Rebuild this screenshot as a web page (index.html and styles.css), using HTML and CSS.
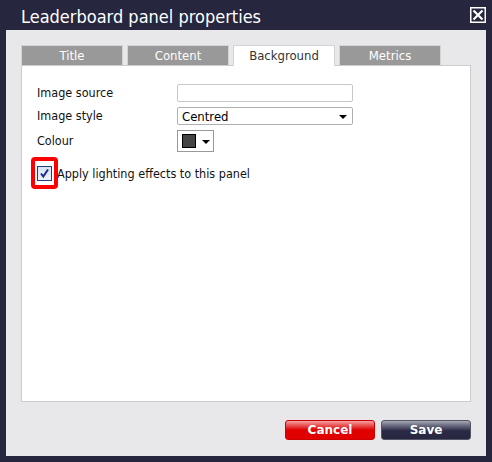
FILE: index.html
```html
<!DOCTYPE html>
<html>
<head>
<meta charset="utf-8">
<link rel="stylesheet" href="styles.css">
</head>
<body>
<div class="dialog">
  <div class="titlebar">
    <span class="title">Leaderboard panel properties</span>
    <svg class="close" width="16" height="16" viewBox="0 0 16 16">
      <rect x="0.75" y="0.75" width="14.5" height="14.5" fill="none" stroke="#fff" stroke-width="1.5"/>
      <path d="M3.5 3.5 L12.5 12.5 M12.5 3.5 L3.5 12.5" stroke="#fff" stroke-width="2.2"/>
    </svg>
  </div>
  <div class="body">
    <div class="tabs">
      <div class="tab">Title</div>
      <div class="tab">Content</div>
      <div class="tab active">Background</div>
      <div class="tab">Metrics</div>
    </div>
    <div class="panel">
      <div class="form">
        <label class="lbl">Image source</label>
        <div class="input"></div>
        <label class="lbl">Image style</label>
        <div class="select"><span>Centred</span><span class="arrow"></span></div>
        <label class="lbl">Colour</label>
        <div class="picker"><span class="swatch"></span><span class="arrow"></span></div>
      </div>
      <div class="check-row">
        <span class="checkbox">
          <svg width="11" height="11" viewBox="0 0 11 11"><path d="M2 5.5 L4.3 8.5 L9 1.5" fill="none" stroke="#1c2a8a" stroke-width="2"/></svg>
          <span class="highlight"></span>
        </span>
        <span class="check-label">Apply lighting effects to this panel</span>
      </div>
    </div>
    <div class="buttons">
      <div class="btn cancel">Cancel</div>
      <div class="btn save">Save</div>
    </div>
  </div>
</div>
</body>
</html>
```

FILE: styles.css
```css
* {
  box-sizing: border-box;
}
html, body {
  margin: 0;
  padding: 0;
  background: #26263f;
}
.dialog {
  width: 492px;
  height: 462px;
  background: #26263f;
  display: flex;
  flex-direction: column;
  font-family: "DejaVu Sans Condensed", "DejaVu Sans", sans-serif;
}
.titlebar {
  height: 30px;
  display: flex;
  align-items: center;
  justify-content: space-between;
  padding: 0 6px 0 21px;
}
.title {
  color: #fff;
  font-size: 18px;
  margin-top: 2px;
}
.close {
  display: block;
  margin-top: -1px;
}
.body {
  flex: 1;
  margin: 0 6px 6px;
  background: #e8e8ea;
  padding: 15px 15px 0 15px;
  display: flex;
  flex-direction: column;
}
.tabs {
  display: flex;
  gap: 4px;
  height: 21px;
  margin-bottom: -1px;
  position: relative;
  z-index: 1;
}
.tab {
  width: 102px;
  height: 20px;
  background: #999;
  border: 1px solid #d4d4d4;
  border-bottom: none;
  color: #fff;
  font-size: 13px;
  text-align: center;
  line-height: 19px;
}
.tab.active {
  background: #fff;
  color: #333;
  height: 21px;
}
.panel {
  height: 337px;
  background: #fff;
  border: 1px solid #ccc;
  padding: 18px 15px 0 15px;
}
.form {
  display: grid;
  grid-template-columns: 140px 176px;
  grid-template-rows: 18px 18px 22px;
  row-gap: 5px;
  align-items: center;
}
.lbl {
  font-size: 12.5px;
  color: #111;
  margin-top: -2px;
}
.input {
  height: 18px;
  border: 1px solid #c8c8c8;
  border-radius: 2px;
  background: #fff;
}
.select {
  height: 18px;
  border: 1px solid #b0b0b0;
  border-radius: 2px;
  display: flex;
  align-items: center;
  justify-content: space-between;
  padding: 0 5px 0 4px;
  font-size: 13px;
  color: #000;
}
.arrow {
  width: 0;
  height: 0;
  border-left: 4px solid transparent;
  border-right: 4px solid transparent;
  border-top: 4px solid #000;
  margin-top: 2px;
}
.picker {
  width: 37px;
  height: 22px;
  border: 1px solid #999;
  display: flex;
  align-items: center;
  gap: 6px;
  padding-left: 4px;
}
.swatch {
  width: 14px;
  height: 14px;
  background: #444;
  border: 1px solid #000;
}
.check-row {
  display: flex;
  align-items: center;
  margin-top: 14px;
}
.checkbox {
  position: relative;
  width: 15px;
  height: 15px;
  border: 1px solid #1e3f7a;
  background: linear-gradient(#d7e2f4, #eef3fb);
  display: flex;
  align-items: center;
  justify-content: center;
}
.checkbox svg {
  display: block;
}
.highlight {
  position: absolute;
  left: -7px;
  top: -10px;
  width: 27px;
  height: 32px;
  border: 4px solid #ff0000;
  border-radius: 4px;
}
.check-label {
  font-size: 12.5px;
  color: #111;
  margin-left: 5px;
  margin-top: -1px;
}
.buttons {
  display: flex;
  justify-content: flex-end;
  gap: 6px;
  margin-top: 18px;
}
.btn {
  width: 90px;
  height: 20px;
  border-radius: 3px;
  color: #fff;
  font-weight: bold;
  font-size: 12px;
  text-align: center;
  line-height: 18px;
  font-family: "DejaVu Sans", sans-serif;
}
.cancel {
  background: linear-gradient(#f3a0a0 0%, #ea5050 25%, #e00000 50%, #e00000 100%);
  border: 1px solid #c00;
}
.save {
  background: linear-gradient(#a8a8b8 0%, #6a6a80 25%, #2a2a45 55%, #262640 100%);
  border: 1px solid #555568;
}
```
